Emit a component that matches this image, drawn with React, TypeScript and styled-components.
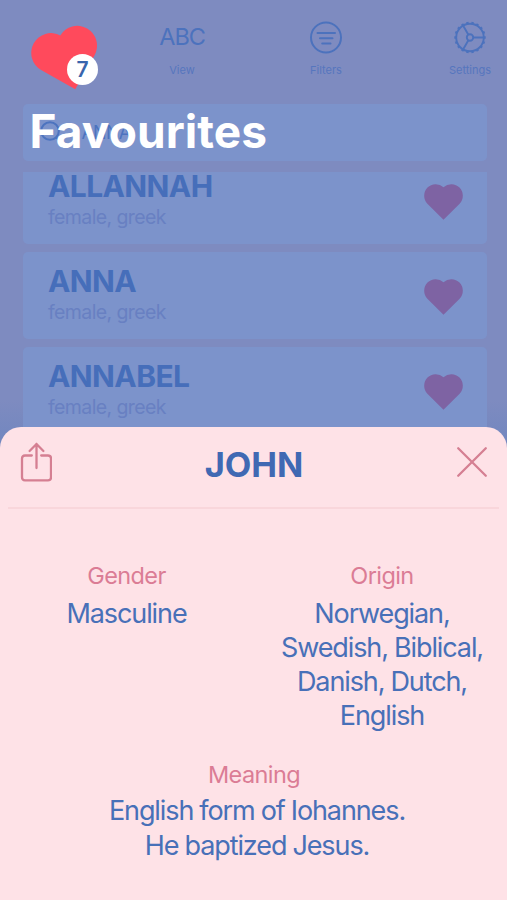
import React from "react";
import styled, { createGlobalStyle } from "styled-components";

const GlobalStyle = createGlobalStyle`
  * { box-sizing: border-box; }
  body { margin: 0; background: #7e8bc0; }
  h1, h2, h3, p, dl, dt, dd, ul { margin: 0; padding: 0; }
  button { border: 0; padding: 0; background: none; display: block; }
  svg { display: block; }
`;

const Screen = styled.main`
  position: relative;
  width: 507px;
  height: 900px;
  overflow: hidden;
  background: linear-gradient(#7e8bc0 400px, #7086bf 450px);
  font-family: Inter, "Liberation Sans", sans-serif;
`;

const Toolbar = styled.nav`
  display: flex;
  justify-content: flex-end;
  gap: 70px;
  height: 104px;
  padding-top: 21px;
`;

const Tool = styled.button`
  display: flex;
  flex-direction: column;
  align-items: center;
  width: 74px;
  height: 60px;
  color: #4c72bd;
  font-family: inherit;
`;

const ToolIcon = styled.span`
  display: flex;
  align-items: center;
  justify-content: center;
  height: 34px;
  font-size: 23.5px;
  line-height: 32px;
  letter-spacing: -1.1px;
`;

const ToolGlyph = styled.span`
  padding-bottom: 2px;
`;

const ToolLabel = styled.span`
  margin-top: 7px;
  font-size: 11px;
  line-height: 16px;
  letter-spacing: 0;
  color: #5676be;
`;

const SearchField = styled.div`
  display: flex;
  align-items: center;
  gap: 16px;
  width: 464px;
  height: 57px;
  margin-left: 22.5px;
  padding-left: 16px;
  border-radius: 5px;
  background: #7c93cb;
  color: #4c73bf;
  font-size: 18px;
  letter-spacing: -0.8px;
`;

const NameList = styled.div`
  display: flex;
  flex-direction: column;
  justify-content: flex-end;
  gap: 8px;
  width: 464px;
  height: 261.5px;
  margin: 11px 0 0 22.5px;
  overflow: hidden;
`;

const NameCard = styled.article`
  display: flex;
  flex-shrink: 0;
  align-items: flex-start;
  justify-content: space-between;
  height: 87px;
  padding: 14px 23.5px 0 25.5px;
  border-radius: 5px;
  background: #7c93cb;
`;

const CardName = styled.h2`
  font-size: 30px;
  font-weight: 700;
  line-height: 30px;
  letter-spacing: -0.6px;
  color: #466eba;
`;

const CardInfo = styled.p`
  margin-top: 4.5px;
  font-size: 19.5px;
  line-height: 24px;
  letter-spacing: -0.6px;
  color: #6880c2;
`;

const CardHeart = styled.span`
  margin-top: 13.5px;
`;

const FavouritesHeart = styled.div`
  position: absolute;
  left: 28px;
  top: 22px;
`;

const CountBadge = styled.span`
  position: absolute;
  left: 39px;
  top: 31.5px;
  width: 31px;
  height: 31px;
  border-radius: 50%;
  background: #fff;
  color: #3965ad;
  font-size: 21px;
  font-weight: 600;
  line-height: 31px;
  text-align: center;
`;

const PageTitle = styled.h1`
  position: absolute;
  left: 29.5px;
  top: 103px;
  color: #fff;
  font-size: 46px;
  font-weight: 700;
  line-height: 56px;
  letter-spacing: 0.08px;
  white-space: nowrap;
`;

const Sheet = styled.section`
  position: absolute;
  left: 0;
  right: 0;
  bottom: 0;
  height: 473.5px;
  border-radius: 21px 21px 0 0;
  background: #fee2e7;
`;

const SheetHeader = styled.header`
  display: grid;
  grid-template-columns: 32px 1fr 32px;
  align-items: center;
  height: 82px;
  margin: 0 8px;
  padding: 0 11px 10px 12px;
  border-bottom: 2px solid #f9d6db;
`;

const SheetTitle = styled.h2`
  padding-top: 6px;
  text-align: center;
  font-size: 34.5px;
  font-weight: 700;
  line-height: 40px;
  letter-spacing: -0.1px;
  color: #4069b3;
`;

const Details = styled.dl`
  display: grid;
  grid-template-columns: 253px 1fr;
  padding-top: 50px;
`;

const Detail = styled.div<{ $wide?: boolean; $inset?: number }>`
  grid-column: ${(p) => (p.$wide ? "1 / -1" : "auto")};
  margin-top: ${(p) => (p.$wide ? "25px" : "0")};
  padding-left: ${(p) => p.$inset ?? 0}px;
  text-align: center;
`;

const DetailLabel = styled.dt<{ $tight?: boolean }>`
  height: ${(p) => (p.$tight ? 36 : 38)}px;
  font-size: 23.5px;
  line-height: 34px;
  letter-spacing: -0.6px;
  color: #db7c95;
`;

const DetailValue = styled.dd<{ $shift?: number }>`
  padding-left: ${(p) => p.$shift ?? 0}px;
  font-size: 27px;
  line-height: 34.2px;
  letter-spacing: -1.1px;
  word-spacing: -0.4px;
  white-space: pre-line;
  color: #4870b8;
`;

const Heart = ({ width, fill }: { width: number; fill: string }) => (
  <svg width={width} height={(width * 36) / 39} viewBox="0 0 39 36" fill={fill}>
    <path d="M19.5 3.25A11.5 11.5 0 0 0 3.37 19.63L19.5 35.75 35.63 19.63A11.5 11.5 0 0 0 19.5 3.25Z" />
  </svg>
);

const TiltedHeart = () => (
  <svg width="72" height="70" viewBox="0 0 72 70" fill="#ff4a5c">
    <g transform="translate(36.1 27.1) rotate(-15.5) scale(1.72)">
      <path d="M0 -8.26A11.5 11.5 0 0 0 -16.13 8.13L0 24.26 16.13 8.13A11.5 11.5 0 0 0 0 -8.26Z" />
    </g>
  </svg>
);

const FilterIcon = () => (
  <svg width="34" height="34" viewBox="0 0 34 34" fill="none" stroke="currentColor" strokeWidth="2" strokeLinecap="round">
    <circle cx="17" cy="16.5" r="15" />
    <path d="M8.5 12H26M11 17.2H23.5M13.2 22.5H21.5" />
  </svg>
);

const teeth = Array.from({ length: 18 }, (_, i) => i * 20);

const GearIcon = () => (
  <svg width="34" height="34" viewBox="-17 -16.5 34 34" fill="none" stroke="currentColor" strokeWidth="1.9">
    <circle r="13.8" />
    <circle r="3.2" />
    <path d="M3.2 0H13.6M-1.6 -2.8L-6.8 -11.8M-1.6 2.8L-6.8 11.8" />
    {teeth.map((angle) => (
      <path key={angle} d="M14 0H15.7" strokeWidth="2.4" transform={`rotate(${angle})`} />
    ))}
  </svg>
);

const SearchIcon = () => (
  <svg width="27" height="27" viewBox="0 0 27 27" fill="none" stroke="currentColor" strokeWidth="2" strokeLinecap="round">
    <circle cx="11" cy="12" r="8.8" />
    <path d="M17.5 18.5L23 24" />
  </svg>
);

const ShareIcon = () => (
  <svg width="32" height="40" viewBox="0 0 32 40" fill="none" stroke="#d57f92" strokeWidth="2.3" strokeLinecap="round" strokeLinejoin="round">
    <path d="M11.8 13.5H5Q2 13.5 2 16.5V35.3Q2 38.3 5 38.3H28Q31 38.3 31 35.3V16.5Q31 13.5 28 13.5H21.2" />
    <path d="M16.5 26V2M9.6 9L16.5 2 23.4 9" />
  </svg>
);

const CloseIcon = () => (
  <svg width="32" height="32" viewBox="0 0 32 32" fill="none" stroke="#d57f92" strokeWidth="2.3" strokeLinecap="round">
    <path d="M2.2 2.2L29.8 29.8M29.8 2.2L2.2 29.8" />
  </svg>
);

const names = ["ALLANNAH", "ANNA", "ANNABEL"];

export default function App() {
  return (
    <Screen>
      <GlobalStyle />
      <Toolbar>
        <Tool>
          <ToolIcon><ToolGlyph>ABC</ToolGlyph></ToolIcon>
          <ToolLabel>View</ToolLabel>
        </Tool>
        <Tool>
          <ToolIcon><FilterIcon /></ToolIcon>
          <ToolLabel>Filters</ToolLabel>
        </Tool>
        <Tool>
          <ToolIcon><GearIcon /></ToolIcon>
          <ToolLabel>Settings</ToolLabel>
        </Tool>
      </Toolbar>
      <SearchField>
        <SearchIcon />
        ANNA
      </SearchField>
      <NameList>
        {names.map((name) => (
          <NameCard key={name}>
            <div>
              <CardName>{name}</CardName>
              <CardInfo>female, greek</CardInfo>
            </div>
            <CardHeart><Heart width={39} fill="#7e63a3" /></CardHeart>
          </NameCard>
        ))}
      </NameList>
      <FavouritesHeart>
        <TiltedHeart />
        <CountBadge>7</CountBadge>
      </FavouritesHeart>
      <PageTitle>Favourites</PageTitle>
      <Sheet>
        <SheetHeader>
          <button aria-label="Share"><ShareIcon /></button>
          <SheetTitle>JOHN</SheetTitle>
          <button aria-label="Close"><CloseIcon /></button>
        </SheetHeader>
        <Details>
          <Detail>
            <DetailLabel>Gender</DetailLabel>
            <DetailValue>Masculine</DetailValue>
          </Detail>
          <Detail $inset={4}>
            <DetailLabel>Origin</DetailLabel>
            <DetailValue>{"Norwegian,\nSwedish, Biblical,\nDanish, Dutch,\nEnglish"}</DetailValue>
          </Detail>
          <Detail $wide $inset={1}>
            <DetailLabel $tight>Meaning</DetailLabel>
            <DetailValue $shift={6}>{"English form of Iohannes.\nHe baptized Jesus."}</DetailValue>
          </Detail>
        </Details>
      </Sheet>
    </Screen>
  );
}
